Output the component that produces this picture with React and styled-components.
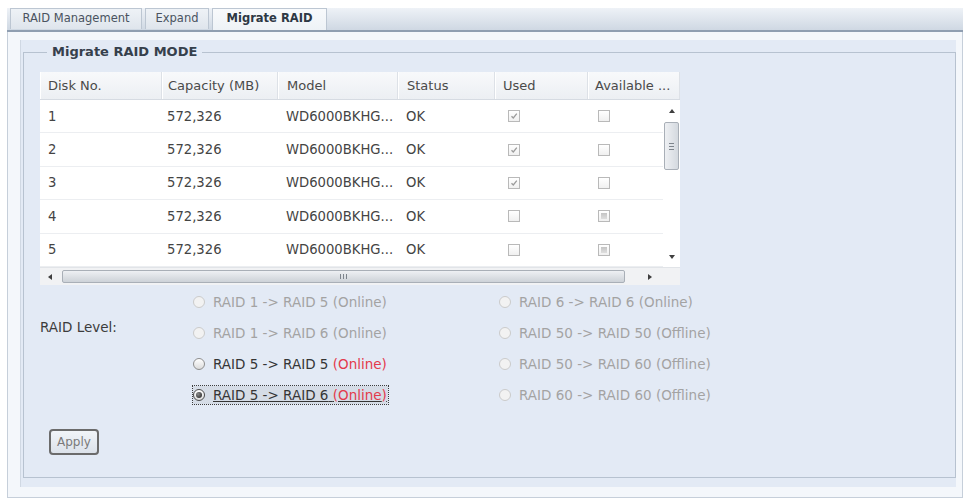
import React from "react";
import styled, { createGlobalStyle } from "styled-components";

const GlobalStyle = createGlobalStyle`
  html, body { margin: 0; padding: 0; background: #ffffff; }
  body { font-family: "DejaVu Sans", Verdana, sans-serif; color: #3c3c3c; }
  * { box-sizing: border-box; }
`;

const Page = styled.div`
  width: 971px;
  height: 498px;
  padding: 8px 8px 0 7px;
  overflow: hidden;
`;

const TabBar = styled.div`
  display: flex;
  align-items: flex-start;
  gap: 3px;
  height: 24px;
  padding-left: 3px;
  background: linear-gradient(#eef2f7, #cfd8e3);
  border-bottom: 2px solid #8f9eb1;
`;

const Tab = styled.div`
  width: ${(p) => p.$w}px;
  height: ${(p) => (p.$active ? 22 : 21)}px;
  text-align: center;
  font-size: 11.5px;
  line-height: 18px;
  font-weight: ${(p) => (p.$active ? "bold" : "normal")};
  color: ${(p) => (p.$active ? "#2e3844" : "#4a5360")};
  background: ${(p) =>
    p.$active ? "linear-gradient(#f8fafc, #eef2f6)" : "linear-gradient(#eef2f6, #dfe5ec)"};
  border: 1px solid #bcc6d2;
  border-bottom: none;
`;

const Panel = styled.div`
  background: #f4f7fb;
  border: 1px solid #c6cfda;
  border-top: none;
  padding: 8px 6px 10px 12px;
`;

const Inner = styled.div`
  background: #e3eaf5;
  border-left: 1px solid #d0d8e3;
  padding: 4px 0 9px 2px;
`;

const GroupBox = styled.fieldset`
  margin: 0;
  min-width: 0;
  border: 1px solid #b7c2d0;
  padding: 12px 16px 22px 16px;
`;

const Legend = styled.legend`
  margin-left: 7px;
  padding: 0 5px;
  font-size: 13px;
  line-height: 16px;
  font-weight: bold;
  color: #36404c;
`;

const COLS = "122px 116px 120px 97px 93px 1fr";

const TableBox = styled.div`
  width: 640px;
`;

const HeaderRow = styled.div`
  display: grid;
  grid-template-columns: ${COLS};
  height: 28px;
  background: linear-gradient(#f8f9fb, #eceff3);
  border-bottom: 1px solid #d6dbe2;
`;

const HeaderCell = styled.div`
  padding-left: ${(p) => p.$pad}px;
  font-size: 13px;
  line-height: 27px;
  color: #4a4a4a;
  white-space: nowrap;
  border-right: 1px solid #dde1e7;
  border-left: 1px solid #ffffff;
`;

const Body = styled.div`
  display: flex;
  height: 167px;
  background: #ffffff;
`;

const Rows = styled.div`
  flex: 1;
  overflow: hidden;
`;

const Row = styled.div`
  display: grid;
  grid-template-columns: ${COLS};
  height: 33.4px;
  align-items: center;
  border-bottom: 1px solid #eceef1;
`;

const Cell = styled.div`
  padding-left: ${(p) => p.$pad}px;
  font-size: 13.2px;
  color: #444444;
  white-space: nowrap;
  display: flex;
  align-items: center;
`;

const CheckBox = styled.span`
  position: relative;
  display: inline-block;
  width: 12px;
  height: 12px;
  border: 1px solid #b9b9b9;
  background: linear-gradient(#ffffff, #f0f0f0);
  ${(p) =>
    p.$filled &&
    `&::after { content: ""; position: absolute; inset: 2px; background: linear-gradient(#c4c4c4, #dedede); }`}
  svg { position: absolute; left: 1px; top: 1px; }
`;

const VScroll = styled.div`
  width: 17px;
  display: flex;
  flex-direction: column;
  align-items: center;
  background: #ffffff;
  padding-top: 9px;
`;

const ScrollThumbV = styled.div`
  width: 15px;
  height: 48px;
  margin-top: 9px;
  border: 1px solid #a9afb7;
  border-radius: 2px;
  background: linear-gradient(90deg, #eef0f3, #d4d9df);
  display: flex;
  flex-direction: column;
  justify-content: center;
  align-items: center;
  gap: 2px;
`;

const GripH = styled.span`
  width: 5px;
  height: 1px;
  background: #7d848c;
`;

const VSpacer = styled.div`
  flex: ${(p) => (p.$fixed ? `0 0 ${p.$fixed}px` : 1)};
`;

const HScroll = styled.div`
  display: flex;
  align-items: center;
  height: 18px;
  background: #f1f2f4;
  border-top: 1px solid #e1e4e8;
`;

const ArrowBox = styled.div`
  width: ${(p) => p.$w}px;
  height: 100%;
  display: flex;
  align-items: center;
  justify-content: ${(p) => p.$justify || "center"};
  padding-right: ${(p) => p.$pr || 0}px;
`;

const ScrollThumbH = styled.div`
  width: 563px;
  height: 13px;
  margin-left: 2px;
  border: 1px solid #a9afb7;
  border-radius: 2px;
  background: linear-gradient(#eef0f3, #cdd2d8);
  display: flex;
  justify-content: center;
  align-items: center;
  gap: 2px;
`;

const GripV = styled.span`
  width: 1px;
  height: 5px;
  background: #7d848c;
`;

const Corner = styled.div`
  width: 17px;
  height: 100%;
  background: #f1f2f4;
`;

const Options = styled.div`
  display: grid;
  grid-template-columns: 153px 306px 1fr;
  grid-auto-rows: 31px;
  margin-top: 1px;
  align-items: center;
`;

const LevelLabel = styled.div`
  grid-column: 1;
  grid-row: 2;
  font-size: 13.5px;
  color: #3c3c3c;
  margin-bottom: 12px;
`;

const Option = styled.label`
  grid-column: ${(p) => p.$col};
  grid-row: ${(p) => p.$row};
  justify-self: start;
  display: flex;
  align-items: center;
  gap: 8px;
  height: 18px;
  font-size: 13.5px;
  white-space: nowrap;
  color: ${(p) => (p.$disabled ? "#a3a3a3" : "#353535")};
  ${(p) =>
    p.$focused &&
    `outline: 1px dotted #3d3d3d; background: #d5dce6; text-decoration: underline; padding-right: 1px;`}
`;

const Radio = styled.span`
  position: relative;
  display: inline-block;
  width: 12px;
  height: 12px;
  border-radius: 50%;
  border: 1px solid ${(p) => (p.$disabled ? "#cbcbcb" : p.$checked ? "#4a4a4a" : "#8e8e8e")};
  background: ${(p) => (p.$disabled ? "#f2f2f2" : "linear-gradient(#ffffff, #dcdcdc)")};
  ${(p) =>
    p.$checked &&
    `&::after { content: ""; position: absolute; left: 2px; top: 2px; width: 6px; height: 6px; border-radius: 50%; background: radial-gradient(circle at 35% 35%, #8a8a8a, #1e1e1e); }`}
`;

const Red = styled.span`
  color: ${(p) => (p.$disabled ? "inherit" : "#e33a4c")};
`;

const ApplyButton = styled.button`
  margin-top: 19px;
  margin-left: 9px;
  width: 50px;
  height: 26px;
  padding: 0;
  border: 2px solid #6b6b6b;
  border-radius: 4px;
  background: linear-gradient(#f1f4f8, #dce2ea);
  font-family: "DejaVu Sans", Verdana, sans-serif;
  font-size: 12px;
  color: #7a7a7a;
`;

const Arrow = ({ dir }) => {
  const pts = {
    up: "0,4 3,0 6,4",
    down: "0,0 3,4 6,0",
    left: "4,0 0,3 4,6",
    right: "0,0 4,3 0,6",
  }[dir];
  const vertical = dir === "up" || dir === "down";
  return (
    <svg width={vertical ? 6 : 4} height={vertical ? 4 : 6} viewBox={vertical ? "0 0 6 4" : "0 0 4 6"}>
      <polygon points={pts} fill="#3f3f3f" />
    </svg>
  );
};

const Check = () => (
  <svg width="8" height="8" viewBox="0 0 8 8">
    <polyline points="1.5,4.2 3.3,6 6.8,1.6" fill="none" stroke="#9b9b9b" strokeWidth="1.3" />
  </svg>
);

const headers = [
  { t: "Disk No.", pad: 7 },
  { t: "Capacity (MB)", pad: 5 },
  { t: "Model", pad: 8 },
  { t: "Status", pad: 8 },
  { t: "Used", pad: 7 },
  { t: "Available ...", pad: 6 },
];

const disks = [
  { n: 1, used: true, avail: false },
  { n: 2, used: true, avail: false },
  { n: 3, used: true, avail: false },
  { n: 4, used: false, avail: true },
  { n: 5, used: false, avail: true },
];

const options = [
  { col: 2, row: 1, from: "RAID 1", to: "RAID 5", mode: "Online", disabled: true },
  { col: 2, row: 2, from: "RAID 1", to: "RAID 6", mode: "Online", disabled: true },
  { col: 2, row: 3, from: "RAID 5", to: "RAID 5", mode: "Online" },
  { col: 2, row: 4, from: "RAID 5", to: "RAID 6", mode: "Online", checked: true },
  { col: 3, row: 1, from: "RAID 6", to: "RAID 6", mode: "Online", disabled: true },
  { col: 3, row: 2, from: "RAID 50", to: "RAID 50", mode: "Offline", disabled: true },
  { col: 3, row: 3, from: "RAID 50", to: "RAID 60", mode: "Offline", disabled: true },
  { col: 3, row: 4, from: "RAID 60", to: "RAID 60", mode: "Offline", disabled: true },
];

export default function App() {
  return (
    <>
      <GlobalStyle />
      <Page>
        <TabBar>
          <Tab $w={132}>RAID Management</Tab>
          <Tab $w={64}>Expand</Tab>
          <Tab $w={115} $active>
            Migrate RAID
          </Tab>
        </TabBar>
        <Panel>
          <Inner>
            <GroupBox>
              <Legend>Migrate RAID MODE</Legend>
              <TableBox>
                <HeaderRow>
                  {headers.map((h) => (
                    <HeaderCell key={h.t} $pad={h.pad}>
                      {h.t}
                    </HeaderCell>
                  ))}
                </HeaderRow>
                <Body>
                  <Rows>
                    {disks.map((d) => (
                      <Row key={d.n}>
                        <Cell $pad={8}>{d.n}</Cell>
                        <Cell $pad={5}>572,326</Cell>
                        <Cell $pad={8}>WD6000BKHG...</Cell>
                        <Cell $pad={8}>OK</Cell>
                        <Cell $pad={13}>
                          <CheckBox>{d.used && <Check />}</CheckBox>
                        </Cell>
                        <Cell $pad={10}>
                          <CheckBox $filled={d.avail} />
                        </Cell>
                      </Row>
                    ))}
                  </Rows>
                  <VScroll>
                    <Arrow dir="up" />
                    <ScrollThumbV>
                      <GripH />
                      <GripH />
                      <GripH />
                    </ScrollThumbV>
                    <VSpacer />
                    <Arrow dir="down" />
                    <VSpacer $fixed={8} />
                  </VScroll>
                </Body>
                <HScroll>
                  <ArrowBox $w={20}>
                    <Arrow dir="left" />
                  </ArrowBox>
                  <ScrollThumbH>
                    <GripV />
                    <GripV />
                    <GripV />
                  </ScrollThumbH>
                  <ArrowBox $w={38} $justify="flex-end" $pr={11}>
                    <Arrow dir="right" />
                  </ArrowBox>
                  <Corner />
                </HScroll>
              </TableBox>
              <Options>
                <LevelLabel>RAID Level:</LevelLabel>
                {options.map((o) => (
                  <Option
                    key={o.from + o.to + o.col}
                    $col={o.col}
                    $row={o.row}
                    $disabled={o.disabled}
                    $focused={o.checked}
                  >
                    <Radio $disabled={o.disabled} $checked={o.checked} />
                    <span>
                      {o.from} -&gt; {o.to} <Red $disabled={o.disabled}>({o.mode})</Red>
                    </span>
                  </Option>
                ))}
              </Options>
              <ApplyButton>Apply</ApplyButton>
            </GroupBox>
          </Inner>
        </Panel>
      </Page>
    </>
  );
}
